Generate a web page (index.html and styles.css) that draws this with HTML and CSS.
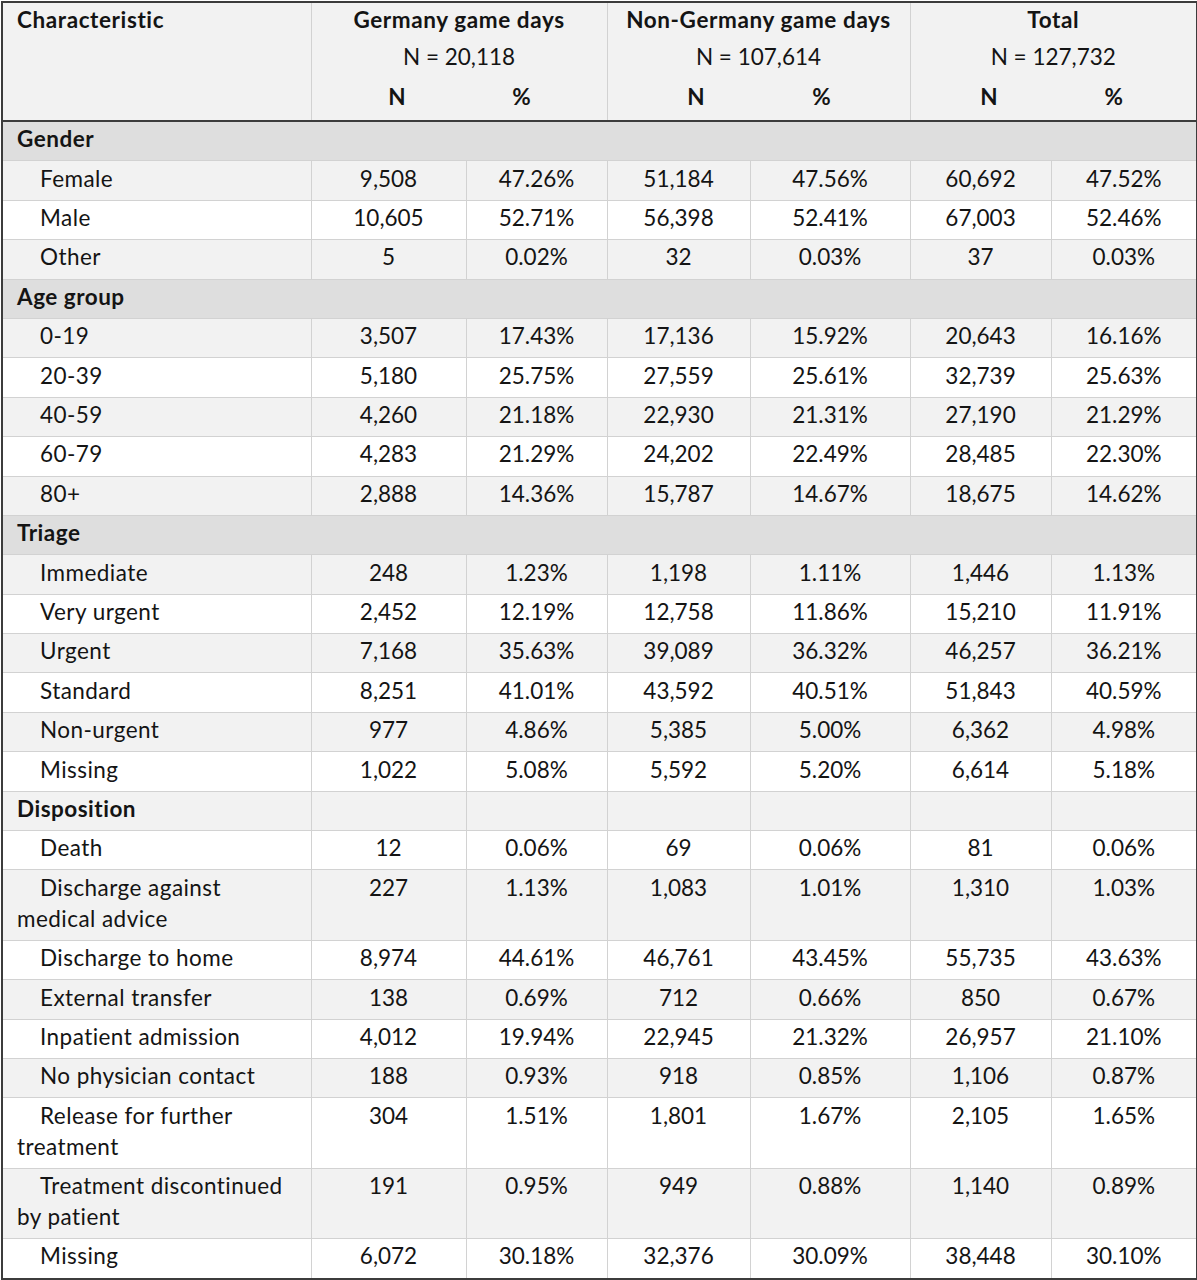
FILE: index.html
```html
<!DOCTYPE html>
<html>
<head>
<meta charset="utf-8">
<link rel="stylesheet" href="styles.css">
</head>
<body>
<table class="tbl">
  <colgroup>
    <col class="c-char"><col class="c-n1"><col class="c-p1"><col class="c-n2"><col class="c-p2"><col class="c-n3"><col class="c-p3">
  </colgroup>
  <thead>
    <tr class="h1">
      <th class="hchar" rowspan="3">Characteristic</th>
      <th class="grp" colspan="2">Germany game days</th>
      <th class="grp" colspan="2">Non-Germany game days</th>
      <th class="grp" colspan="2">Total</th>
    </tr>
    <tr class="h2">
      <td class="grp" colspan="2">N = 20,118</td>
      <td class="grp" colspan="2">N = 107,614</td>
      <td class="grp" colspan="2">N = 127,732</td>
    </tr>
    <tr class="h3">
      <th class="grp hn1">N</th><th class="hp1">%</th>
      <th class="grp hn2">N</th><th class="hp2">%</th>
      <th class="grp hn3">N</th><th class="hp3">%</th>
    </tr>
  </thead>
  <tbody>
    <tr class="sec"><td colspan="7">Gender</td></tr>
    <tr class="g"><td class="lbl">Female</td><td>9,508</td><td>47.26%</td><td>51,184</td><td>47.56%</td><td>60,692</td><td>47.52%</td></tr>
    <tr><td class="lbl">Male</td><td>10,605</td><td>52.71%</td><td>56,398</td><td>52.41%</td><td>67,003</td><td>52.46%</td></tr>
    <tr class="g"><td class="lbl">Other</td><td>5</td><td>0.02%</td><td>32</td><td>0.03%</td><td>37</td><td>0.03%</td></tr>
    <tr class="sec"><td colspan="7">Age group</td></tr>
    <tr class="g"><td class="lbl">0-19</td><td>3,507</td><td>17.43%</td><td>17,136</td><td>15.92%</td><td>20,643</td><td>16.16%</td></tr>
    <tr><td class="lbl">20-39</td><td>5,180</td><td>25.75%</td><td>27,559</td><td>25.61%</td><td>32,739</td><td>25.63%</td></tr>
    <tr class="g"><td class="lbl">40-59</td><td>4,260</td><td>21.18%</td><td>22,930</td><td>21.31%</td><td>27,190</td><td>21.29%</td></tr>
    <tr><td class="lbl">60-79</td><td>4,283</td><td>21.29%</td><td>24,202</td><td>22.49%</td><td>28,485</td><td>22.30%</td></tr>
    <tr class="g"><td class="lbl">80+</td><td>2,888</td><td>14.36%</td><td>15,787</td><td>14.67%</td><td>18,675</td><td>14.62%</td></tr>
    <tr class="sec"><td colspan="7">Triage</td></tr>
    <tr class="g"><td class="lbl">Immediate</td><td>248</td><td>1.23%</td><td>1,198</td><td>1.11%</td><td>1,446</td><td>1.13%</td></tr>
    <tr><td class="lbl">Very urgent</td><td>2,452</td><td>12.19%</td><td>12,758</td><td>11.86%</td><td>15,210</td><td>11.91%</td></tr>
    <tr class="g"><td class="lbl">Urgent</td><td>7,168</td><td>35.63%</td><td>39,089</td><td>36.32%</td><td>46,257</td><td>36.21%</td></tr>
    <tr><td class="lbl">Standard</td><td>8,251</td><td>41.01%</td><td>43,592</td><td>40.51%</td><td>51,843</td><td>40.59%</td></tr>
    <tr class="g"><td class="lbl">Non-urgent</td><td>977</td><td>4.86%</td><td>5,385</td><td>5.00%</td><td>6,362</td><td>4.98%</td></tr>
    <tr><td class="lbl">Missing</td><td>1,022</td><td>5.08%</td><td>5,592</td><td>5.20%</td><td>6,614</td><td>5.18%</td></tr>
    <tr class="g"><td class="bold">Disposition</td><td></td><td></td><td></td><td></td><td></td><td></td></tr>
    <tr><td class="lbl">Death</td><td>12</td><td>0.06%</td><td>69</td><td>0.06%</td><td>81</td><td>0.06%</td></tr>
    <tr class="g"><td class="lbl">Discharge against<br>medical advice</td><td>227</td><td>1.13%</td><td>1,083</td><td>1.01%</td><td>1,310</td><td>1.03%</td></tr>
    <tr><td class="lbl">Discharge to home</td><td>8,974</td><td>44.61%</td><td>46,761</td><td>43.45%</td><td>55,735</td><td>43.63%</td></tr>
    <tr class="g"><td class="lbl">External transfer</td><td>138</td><td>0.69%</td><td>712</td><td>0.66%</td><td>850</td><td>0.67%</td></tr>
    <tr><td class="lbl">Inpatient admission</td><td>4,012</td><td>19.94%</td><td>22,945</td><td>21.32%</td><td>26,957</td><td>21.10%</td></tr>
    <tr class="g"><td class="lbl">No physician contact</td><td>188</td><td>0.93%</td><td>918</td><td>0.85%</td><td>1,106</td><td>0.87%</td></tr>
    <tr><td class="lbl">Release for further<br>treatment</td><td>304</td><td>1.51%</td><td>1,801</td><td>1.67%</td><td>2,105</td><td>1.65%</td></tr>
    <tr class="g"><td class="lbl">Treatment discontinued<br>by patient</td><td>191</td><td>0.95%</td><td>949</td><td>0.88%</td><td>1,140</td><td>0.89%</td></tr>
    <tr><td class="lbl">Missing</td><td>6,072</td><td>30.18%</td><td>32,376</td><td>30.09%</td><td>38,448</td><td>30.10%</td></tr>
  </tbody>
</table>
</body>
</html>
```
FILE: styles.css
```css
html, body {
  margin: 0;
  padding: 0;
  background: #ffffff;
}
body {
  padding: 1px 1px 0 1px;
}
.tbl {
  border-collapse: collapse;
  table-layout: fixed;
  width: 1195px;
  font-family: Lato, "Liberation Sans", sans-serif;
  font-size: 22.5px;
  color: #141414;
  border: 2px solid #3c3c3c;
}
.c-char { width: 309px; }
.c-n1 { width: 155px; }
.c-p1 { width: 141px; }
.c-n2 { width: 143px; }
.c-p2 { width: 160px; }
.c-n3 { width: 141px; }
.c-p3 { width: 146px; }

thead th, thead td {
  background: #f2f2f2;
  line-height: 30px;
  text-align: center;
  padding: 0;
  border: none;
}
thead th { font-weight: 700; letter-spacing: 0.6px; }
thead td { font-weight: 400; }
thead .grp { border-left: 1px solid #d2d2d2; }
.hchar {
  text-align: left;
  vertical-align: top;
  padding: 2px 14px 0 14px;
  border-bottom: 2px solid #3c3c3c;
}
.h1 th.grp { padding: 2px 0 1px; }
.h2 td { padding: 6px 0 1px; }
.h3 th { padding: 9px 0 8px; border-bottom: 2px solid #3c3c3c; }
.h3 .hn1 { padding-left: 17px; }
.h3 .hp1 { padding-right: 29px; }
.h3 .hn2 { padding-left: 35px; }
.h3 .hp2 { padding-right: 16px; }
.h3 .hn3 { padding-left: 17px; }
.h3 .hp3 { padding-right: 19px; }

tbody td {
  border: 1px solid #d2d2d2;
  padding: 1.3px 14px 6.1px;
  line-height: 31px;
  text-align: center;
  vertical-align: top;
  background: #ffffff;
  white-space: nowrap;
}
tbody tr.g td { background: #f2f2f2; }
tbody tr.sec td {
  background: #dedede;
  text-align: left;
  font-weight: 700;
  letter-spacing: 0.5px;
}
tbody td.lbl {
  text-align: left;
  text-indent: 23px;
  letter-spacing: 0.45px;
}
tbody td.bold {
  text-align: left;
  font-weight: 700;
  letter-spacing: 0.5px;
}
```
